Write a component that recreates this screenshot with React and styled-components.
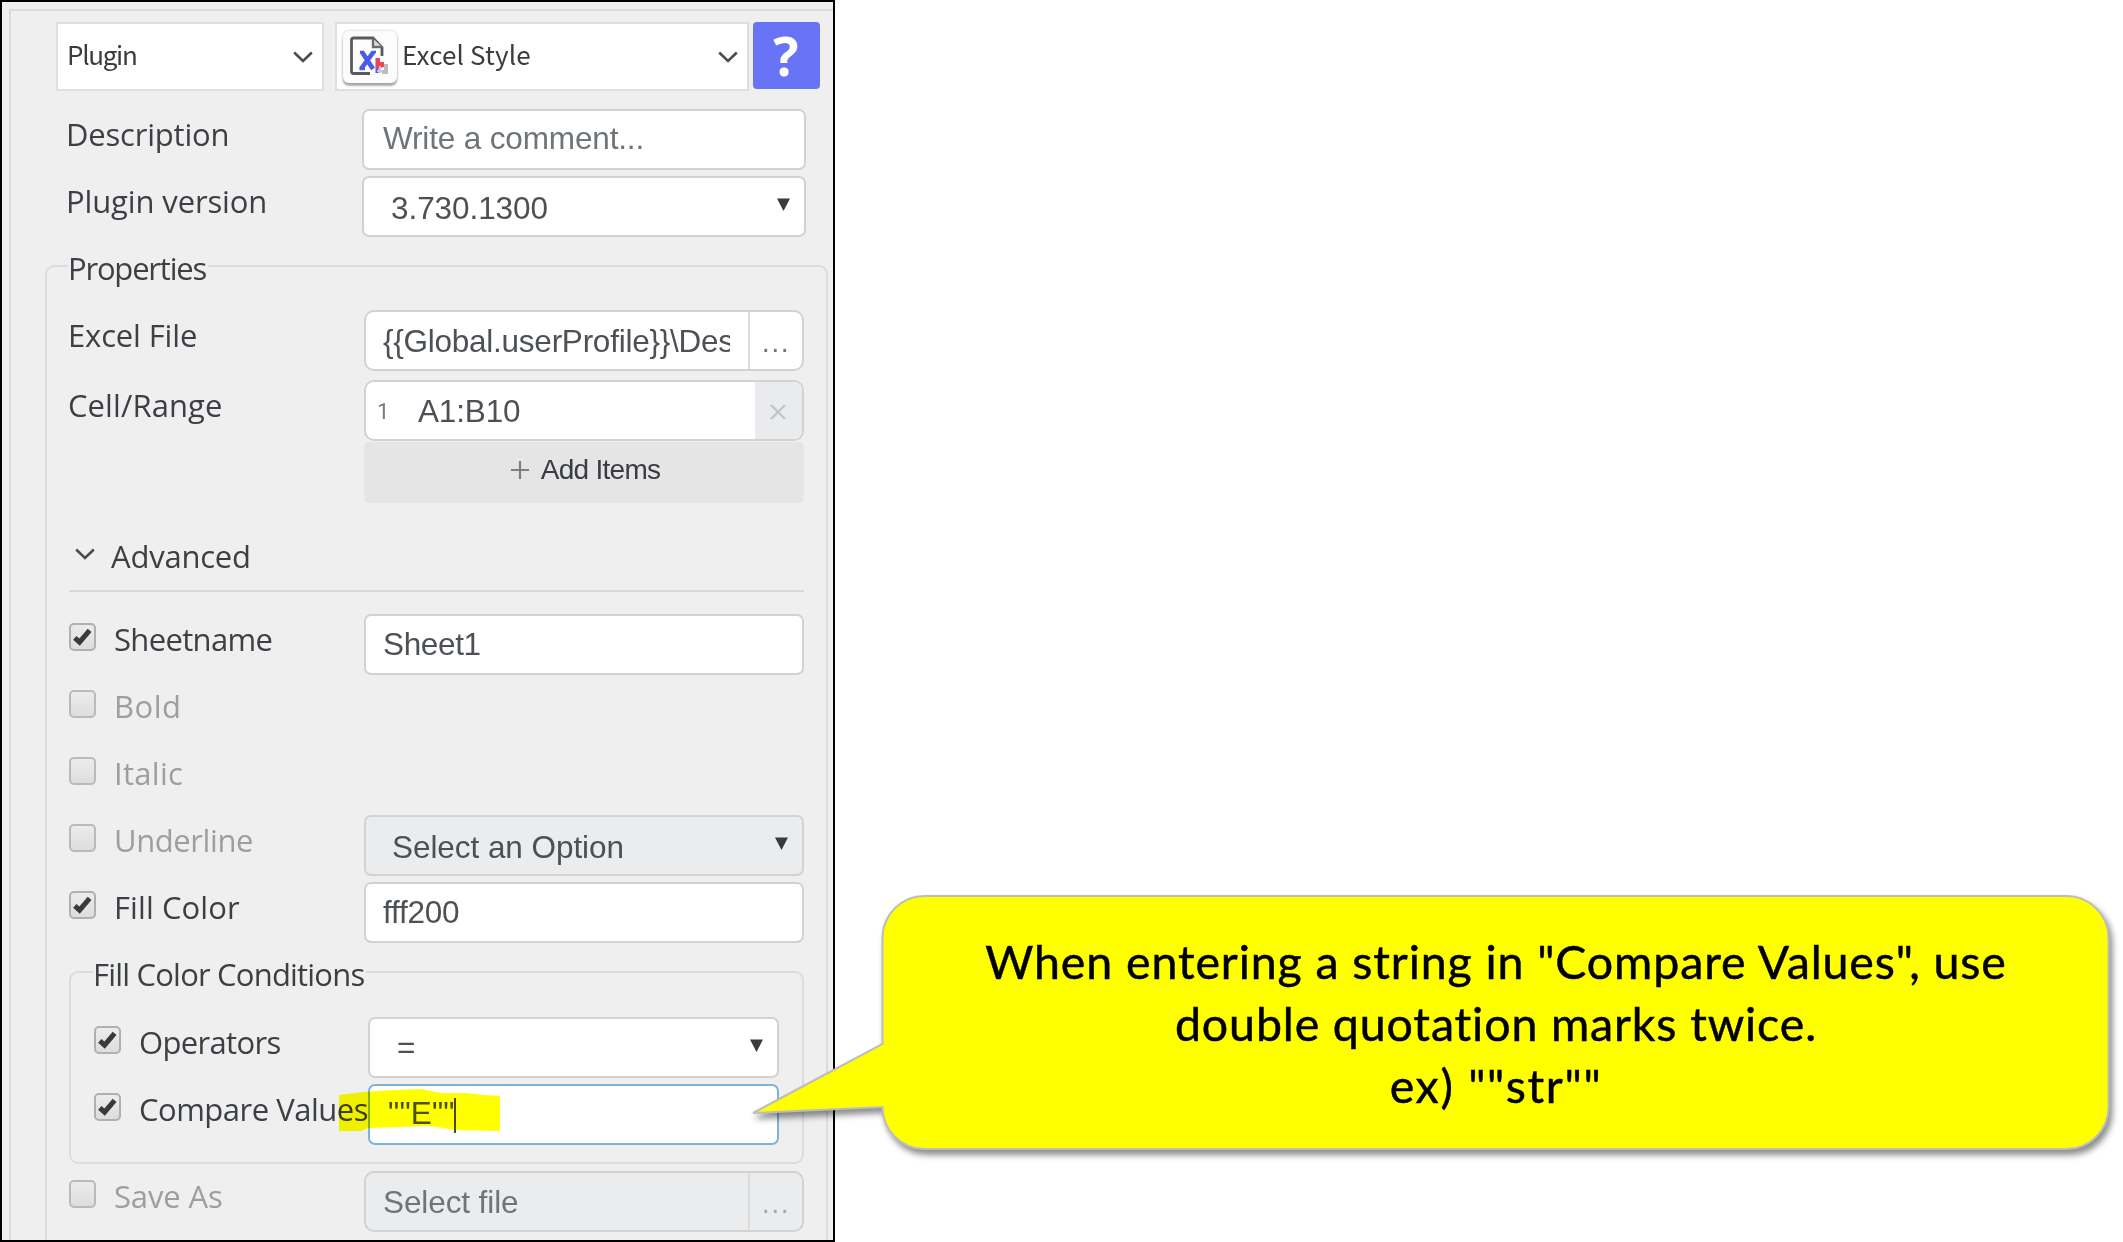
import React from "react";
import styled, { createGlobalStyle, css } from "styled-components";

const GlobalStyle = createGlobalStyle`
  *, *::before, *::after { box-sizing: border-box; }
  body { margin: 0; background: #fff; overflow: hidden; }
`;

const labelFont = `"Open Sans", "Noto Sans", sans-serif`;
const fieldFont = `"Liberation Sans", Arial, sans-serif`;

const Page = styled.main`
  position: relative;
  display: flex;
  width: 2123px;
  height: 1242px;
  overflow: hidden;
  background: #fff;
`;

const Panel = styled.section`
  width: 835px;
  height: 1242px;
  padding: 7px 0 0 7px;
  overflow: hidden;
  border: 2px solid #000;
  background: #f0f0f0;
`;

const PanelBody = styled.div`
  display: flex;
  flex-direction: column;
  height: 1300px;
  padding-top: 11px;
  border: solid #dcdcdc;
  border-width: 2px 0 0 2px;
  background: #efefef;
`;

const Toolbar = styled.div`
  display: flex;
  flex: none;
  align-items: flex-start;
  height: 87px;
  padding-left: 45px;
`;

const Picker = styled.div`
  display: flex;
  align-items: center;
  width: ${(p) => p.$width}px;
  height: 69px;
  margin-right: ${(p) => p.$gap}px;
  padding: 0 9px 0 ${(p) => p.$inset}px;
  border: 2px solid #dfdfdf;
  background: #fff;
`;

const PickerText = styled.span`
  flex: 1;
  padding-bottom: 5px;
  color: #3c3c3c;
  font: 400 26px/38px "Noto Sans CJK JP", sans-serif;
  letter-spacing: ${(p) => p.$ls}px;
  white-space: nowrap;
`;

const HelpButton = styled.button`
  display: flex;
  align-items: center;
  justify-content: center;
  width: 67px;
  height: 67px;
  padding: 0 1px 0 0;
  border: 0;
  border-radius: 4px;
  background: #6873f6;
  color: #fff;
  font: 700 53px/60px ${labelFont};
`;

const IconTile = styled.span`
  display: flex;
  align-items: center;
  justify-content: center;
  width: 54px;
  height: 52px;
  margin-right: 5px;
  padding: 0 3px 1px 0;
  border-radius: 6px;
  background: #fcfcfc;
  box-shadow: 0 3px 2px rgba(0, 0, 0, 0.3), 0 0 3px rgba(0, 0, 0, 0.22);
`;

const Row = styled.div`
  display: grid;
  flex: none;
  grid-template-columns: ${(p) => p.$label}px ${(p) => p.$field}px;
  align-items: start;
  height: ${(p) => p.$height || 67}px;
`;

const LabelCell = styled.label`
  display: flex;
  align-items: flex-start;
  padding: 4px 0 0 ${(p) => p.$indent}px;
  color: ${(p) => (p.$muted ? "#9c9ea0" : "#3c3f43")};
`;

const LabelText = styled.span`
  font: 400 31px/42px ${labelFont};
  letter-spacing: ${(p) => p.$ls || 0}px;
  white-space: nowrap;
`;

const CheckBox = styled.span`
  display: flex;
  flex: none;
  align-items: center;
  justify-content: center;
  width: 27px;
  height: 28px;
  margin: 5px 18px 0 0;
  border: 2px solid ${(p) => (p.$muted ? "#bababa" : "#b0b0b0")};
  border-radius: 5px;
  background: linear-gradient(#ececec, #dddddd);
`;

const fieldBox = css`
  display: flex;
  align-items: stretch;
  width: 100%;
  height: 61px;
  overflow: hidden;
  border: 2px solid ${(p) => (p.$focus ? "#7db2dd" : "#d2d2d2")};
  border-radius: ${(p) => p.$radius || 7}px;
  background: ${(p) => (p.$disabled ? "#ebecee" : "#fff")};
`;

const Field = styled.div`
  ${fieldBox}
`;

const FieldText = styled.span`
  flex: 1;
  min-width: 0;
  margin: ${(p) => p.$top || 0}px ${(p) => p.$end || 14}px 0 ${(p) => p.$inset || 18}px;
  overflow: hidden;
  color: ${(p) => (p.$placeholder ? "#6e747a" : "#4d5054")};
  font: 400 31.5px/57px ${fieldFont};
  letter-spacing: ${(p) => p.$ls || 0}px;
  white-space: pre;
`;

const Arrow = styled.span`
  flex: none;
  padding: 20px 14px 0 0;
  line-height: 0;
`;

const BrowseButton = styled.span`
  flex: none;
  width: 54px;
  border-left: 2px solid #dcdcdc;
  color: ${(p) => (p.$disabled ? "#a5a8ab" : "#74777a")};
  font: 400 29px/60px ${fieldFont};
  letter-spacing: 1.4px;
  text-align: center;
`;

const ItemIndex = styled.span`
  flex: none;
  width: 34px;
  padding-left: 11px;
  color: #77797b;
  font: 400 22px/59px Roboto, sans-serif;
`;

const RemoveButton = styled.span`
  display: flex;
  flex: none;
  align-items: center;
  justify-content: center;
  width: 47px;
  padding-top: 3px;
  padding-right: 2px;
  background: #e9ebed;
`;

const ItemList = styled.div`
  display: flex;
  flex-direction: column;
  gap: 1px;
`;

const AddButton = styled.button`
  display: flex;
  align-items: center;
  justify-content: center;
  gap: 12px;
  height: 61px;
  padding: 0 0 5px 3px;
  border: 0;
  border-radius: 5px;
  background: #e5e5e5;
  color: #393c40;
  font: 400 28px/40px ${fieldFont};
  letter-spacing: -0.72px;
`;

const Properties = styled.fieldset`
  flex: none;
  width: 783px;
  min-width: 0;
  height: 1100px;
  margin: 5px 0 0 34px;
  padding: 26px 0 0;
  border: 2px solid #dcdcdc;
  border-radius: 9px;
`;

const Conditions = styled.fieldset`
  width: 735px;
  min-width: 0;
  height: 210px;
  margin: 0 0 7px 22px;
  padding: 27px 0 0;
  border: 2px solid #dcdcdc;
  border-radius: 9px;
`;

const Legend = styled.legend`
  height: 36px;
  margin-left: ${(p) => p.$offset}px;
  padding: 4px 2px 0 0;
  color: #3c3f43;
  font: 400 31px/33px ${labelFont};
  letter-spacing: ${(p) => p.$ls}px;
  white-space: nowrap;
`;

const AdvancedHeader = styled.div`
  display: flex;
  align-items: flex-start;
  width: 735px;
  height: 58px;
  margin: 0 0 22px 22px;
  padding: 1px 0 0 6px;
  border-bottom: 2px solid #dadada;
  color: #3c3f43;
`;

const HeaderChevron = styled.span`
  width: 36px;
  padding-top: 13px;
  line-height: 0;
`;

const Caret = styled.i`
  align-self: center;
  flex: none;
  width: 2px;
  height: 35px;
  margin: 2px auto 0 -1px;
  background: #4b4b20;
`;

const EntryText = styled(FieldText)`
  flex: none;
  margin-right: 0;
`;

const Marker = styled.svg`
  position: absolute;
  left: 336px;
  top: 1086px;
  mix-blend-mode: multiply;
`;

const Callout = styled.aside`
  position: absolute;
  left: 740px;
  top: 880px;
  width: 1383px;
  height: 290px;
`;

const Bubble = styled.svg`
  position: absolute;
  inset: 0;
  filter: drop-shadow(3px 5px 3px rgba(0, 0, 0, 0.45));
`;

const CalloutText = styled.div`
  position: relative;
  display: flex;
  flex-direction: column;
  align-items: center;
  width: 1226px;
  margin: 50px 0 0 143px;
  color: #000;
`;

const CalloutLine = styled.span`
  font: 400 46.500px/62px Lato, Carlito, sans-serif;
  letter-spacing: ${(p) => p.$ls}px;
  white-space: nowrap;
  -webkit-text-stroke: 0.5px #000;
`;

const Chevron = () => (
  <svg width="20" height="12" viewBox="0 0 20 12" fill="none">
    <path d="M1.2 1.5 L10 10 L18.8 1.5" stroke="#4a4a4a" strokeWidth="2.5" />
  </svg>
);

const Triangle = () => (
  <Arrow>
    <svg width="13" height="13" viewBox="0 0 13 13">
      <path d="M0 0.5H13L6.5 13Z" fill="#383b3e" />
    </svg>
  </Arrow>
);

const Check = ({ on }) => (
  <CheckBox $muted={!on}>
    {on && (
      <svg width="21" height="20" viewBox="0 0 21 20" fill="none">
        <path d="M2.8 10.8 L7.6 15.2 L17.6 3.4" stroke="#3a3a3a" strokeWidth="5" />
      </svg>
    )}
  </CheckBox>
);

const ExcelIcon = () => (
  <svg width="40" height="40" viewBox="0 0 40 40" fill="none">
    <path
      d="M21 37.5H4.5Q2.5 37.5 2.5 35.5V4Q2.5 2 4.5 2H24L33 11.5V20"
      stroke="#5a5a5a" strokeWidth="2.8"
    />
    <path d="M24 2.5V11H33" stroke="#6c6c6c" strokeWidth="2.4" fill="#ddd" />
    <path d="M11 16H15M23 16H27" stroke="#4a5be6" strokeWidth="2.4" />
    <path d="M13 16L24 33M24.5 16L12 33" stroke="#4a5be6" strokeWidth="4.6" />
    <path d="M10.5 33H16" stroke="#4a5be6" strokeWidth="2.4" />
    <path d="M28 22V37" stroke="#4a5be6" strokeWidth="3" />
    <path d="M27 22H31V26H35V31L27 33Z" fill="#ea4550" />
    <path d="M31 30V37M28 35H33" stroke="#c9c5ee" strokeWidth="2" />
    <path d="M35 28H39V38H33V34H35Z" fill="#b9beb9" />
  </svg>
);

const FormRow = ({ label, ls, checked, indent, labelWidth = 317, fieldWidth = 440, height, children }) => {
  const optional = checked !== undefined;
  return (
    <Row $label={labelWidth} $field={fieldWidth} $height={height}>
      <LabelCell $indent={indent ?? (optional ? 22 : 21)} $muted={checked === false}>
        {optional && <Check on={checked} />}
        <LabelText $ls={ls}>{label}</LabelText>
      </LabelCell>
      {children}
    </Row>
  );
};

export default function App() {
  return (
    <Page>
      <GlobalStyle />
      <Panel>
        <PanelBody>
          <Toolbar>
            <Picker $width={268} $gap={11} $inset={9}>
              <PickerText $ls={-1.3}>Plugin</PickerText>
              <Chevron />
            </Picker>
            <Picker $width={414} $gap={4} $inset={6}>
              <IconTile>
                <ExcelIcon />
              </IconTile>
              <PickerText $ls={0.16}>Excel Style</PickerText>
              <Chevron />
            </Picker>
            <HelpButton>?</HelpButton>
          </Toolbar>

          <FormRow label="Description" ls={-0.2} indent={55} labelWidth={351} fieldWidth={444}>
            <Field>
              <FieldText $placeholder $top={-1} $inset={19} $ls={-0.15}>Write a comment...</FieldText>
            </Field>
          </FormRow>
          <FormRow label="Plugin version" ls={-0.13} indent={55} labelWidth={351} fieldWidth={444}>
            <Field>
              <FieldText $inset={27} $top={2} $ls={-0.07}>3.730.1300</FieldText>
              <Triangle />
            </Field>
          </FormRow>

          <Properties>
            <Legend $offset={21} $ls={-1.2}>Properties</Legend>
            <FormRow label="Excel File" ls={-0.15} height={70}>
              <Field $radius={10}>
                <FieldText $inset={17} $top={1} $end={18} $ls={-0.25}>{"{{Global.userProfile}}\\Des"}</FieldText>
                <BrowseButton>...</BrowseButton>
              </Field>
            </FormRow>
            <FormRow label="Cell/Range" ls={0.09} height={154}>
              <ItemList>
                <Field $radius={10}>
                  <ItemIndex>1</ItemIndex>
                  <FieldText $top={1} $ls={-0.16}>A1:B10</FieldText>
                  <RemoveButton>
                    <svg width="16" height="16" viewBox="0 0 16 16">
                      <path d="M1 1L15 15M15 1L1 15" stroke="#c2c4c6" strokeWidth="2.4" />
                    </svg>
                  </RemoveButton>
                </Field>
                <AddButton>
                  <svg width="18" height="18" viewBox="0 0 18 18">
                    <path d="M9 0V18M0 9H18" stroke="#7d8082" strokeWidth="2.2" />
                  </svg>
                  Add Items
                </AddButton>
              </ItemList>
            </FormRow>

            <AdvancedHeader>
              <HeaderChevron>
                <Chevron />
              </HeaderChevron>
              <LabelText $ls={-0.22}>Advanced</LabelText>
            </AdvancedHeader>

            <FormRow label="Sheetname" ls={-0.66} checked>
              <Field>
                <FieldText $inset={17} $ls={-0.36}>Sheet1</FieldText>
              </Field>
            </FormRow>
            <FormRow label="Bold" ls={0.5} checked={false} />
            <FormRow label="Italic" ls={0.28} checked={false} />
            <FormRow label="Underline" ls={-0.41} checked={false}>
              <Field $disabled>
                <FieldText $inset={26} $top={2} $ls={-0.06}>Select an Option</FieldText>
                <Triangle />
              </Field>
            </FormRow>
            <FormRow label="Fill Color" ls={0.09} checked height={72}>
              <Field>
                <FieldText $inset={17} $ls={-0.23}>fff200</FieldText>
              </Field>
            </FormRow>

            <Conditions>
              <Legend $offset={22} $ls={-0.8}>Fill Color Conditions</Legend>
              <FormRow label="Operators" ls={-0.66} checked indent={23} labelWidth={297} fieldWidth={411}>
                <Field>
                  <FieldText $inset={27}>=</FieldText>
                  <Triangle />
                </Field>
              </FormRow>
              <FormRow label="Compare Values" ls={-0.5} checked indent={23} labelWidth={297} fieldWidth={411}>
                <Field $focus>
                  <EntryText $inset={18} $top={-1} $ls={0.2}>{'""E""'}</EntryText>
                  <Caret />
                </Field>
              </FormRow>
            </Conditions>

            <FormRow label="Save As" ls={-0.13} checked={false}>
              <Field $disabled $radius={10}>
                <FieldText $inset={17} $top={1} $placeholder $ls={-0.1}>Select file</FieldText>
                <BrowseButton $disabled>...</BrowseButton>
              </Field>
            </FormRow>
          </Properties>
        </PanelBody>
      </Panel>

      <Marker width="170" height="48" viewBox="0 0 170 48">
        <path
          d="M3 9L28 6L58 4L85 3L105 7L130 7L148 9L164 10V45L120 44L95 40L65 41L32 42L25 45L3 45Z"
          fill="#ffff00"
        />
      </Marker>

      <Callout>
        <Bubble width="1383" height="290" viewBox="0 0 1383 290">
          <path
            d="M184.500 16H1326.500A42 42 0 0 1 1368.500 58V227A42 42 0 0 1 1326.500 269H184.500A42 42 0 0 1 142.500 227L13 233L142.500 164V58A42 42 0 0 1 184.500 16Z"
            fill="#ffff00" stroke="#bdbdbd" strokeWidth="2"
          />
        </Bubble>
        <CalloutText>
          <CalloutLine $ls={0.9}>When entering a string in "Compare Values", use</CalloutLine>
          <CalloutLine $ls={0.87}>double quotation marks twice.</CalloutLine>
          <CalloutLine $ls={1.7}>ex) ""str""</CalloutLine>
        </CalloutText>
      </Callout>
    </Page>
  );
}
